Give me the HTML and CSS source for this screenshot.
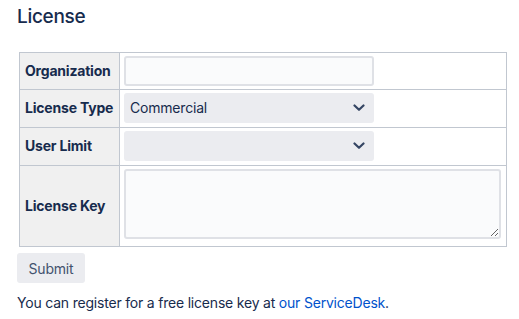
FILE: index.html
```html
<!DOCTYPE html>
<html>
<head>
<meta charset="utf-8">
<link rel="stylesheet" href="styles.css">
</head>
<body>
<h2 class="title">License</h2>
<form class="form">
<table class="license-table">
  <tr class="org-row">
    <th>Organization</th>
    <td><input class="text-input" type="text"></td>
  </tr>
  <tr>
    <th>License Type</th>
    <td>
      <div class="select">
        <span class="select-value">Commercial</span>
        <svg class="chevron" width="12" height="8" viewBox="0 0 12 8"><path d="M1.5 1.5 L6 5.8 L10.5 1.5" fill="none" stroke="#344563" stroke-width="2.2" stroke-linecap="round" stroke-linejoin="round"/></svg>
      </div>
    </td>
  </tr>
  <tr>
    <th>User Limit</th>
    <td>
      <div class="select">
        <span class="select-value"></span>
        <svg class="chevron" width="12" height="8" viewBox="0 0 12 8"><path d="M1.5 1.5 L6 5.8 L10.5 1.5" fill="none" stroke="#344563" stroke-width="2.2" stroke-linecap="round" stroke-linejoin="round"/></svg>
      </div>
    </td>
  </tr>
  <tr class="key-row">
    <th>License Key</th>
    <td><textarea class="text-area"></textarea></td>
  </tr>
</table>
<button class="submit" type="button">Submit</button>
</form>
<p class="note">You can register for a free license key at <a class="link" href="#">our ServiceDesk</a>.</p>
</body>
</html>
```

FILE: styles.css
```css
html, body {
  margin: 0;
  padding: 0;
  background: #ffffff;
}
body {
  font-family: Inter, "Noto Sans", sans-serif;
  color: #172b4d;
  font-size: 14px;
  line-height: 20px;
  letter-spacing: -0.2px;
  padding: 5px 17px 0 17px;
}
.title {
  margin: 0;
  font-size: 19px;
  line-height: 24px;
  font-weight: 500;
  letter-spacing: -0.3px;
  color: #172b4d;
}
.form {
  margin: 23px 0 0 0;
}
.license-table {
  border-collapse: collapse;
  margin-left: 2px;
  width: 488px;
}
.license-table th,
.license-table td {
  border: 1px solid #c1c7d0;
  padding: 3px 4px 4px 4px;
}
.license-table .org-row td {
  padding-bottom: 3px;
}
.license-table th {
  width: 90px;
  background: #f0f0f0;
  text-align: left;
  font-weight: 700;
  padding-left: 5px;
  padding-right: 4px;
  vertical-align: middle;
  white-space: nowrap;
}
.text-input {
  display: block;
  box-sizing: border-box;
  width: 250px;
  height: 30px;
  margin: 0;
  border: 2px solid #dfe1e6;
  border-radius: 3px;
  background: #fafbfc;
  font: inherit;
}
.select {
  box-sizing: border-box;
  width: 250px;
  height: 30px;
  border-radius: 3px;
  background: #ebecf0;
  display: flex;
  align-items: center;
  justify-content: space-between;
  padding: 0 9px 0 6px;
  color: #172b4d;
}
.chevron {
  display: block;
}
.key-row td {
  padding-bottom: 7px;
}
.text-area {
  display: block;
  box-sizing: border-box;
  width: 377px;
  height: 70px;
  margin: 0;
  border: 2px solid #dfe1e6;
  border-radius: 3px;
  background: #fafbfc;
  font: inherit;
}
.submit {
  display: block;
  margin-top: 6px;
  box-sizing: border-box;
  width: 68px;
  height: 30px;
  border: none;
  border-radius: 3px;
  background: #ebecf0;
  color: #42526e;
  font-family: Inter, "Noto Sans", sans-serif;
  font-size: 14px;
  letter-spacing: -0.2px;
  padding: 0;
}
.note {
  margin: 10px 0 0 0;
}
.link {
  color: #0052cc;
  text-decoration: none;
}
```
